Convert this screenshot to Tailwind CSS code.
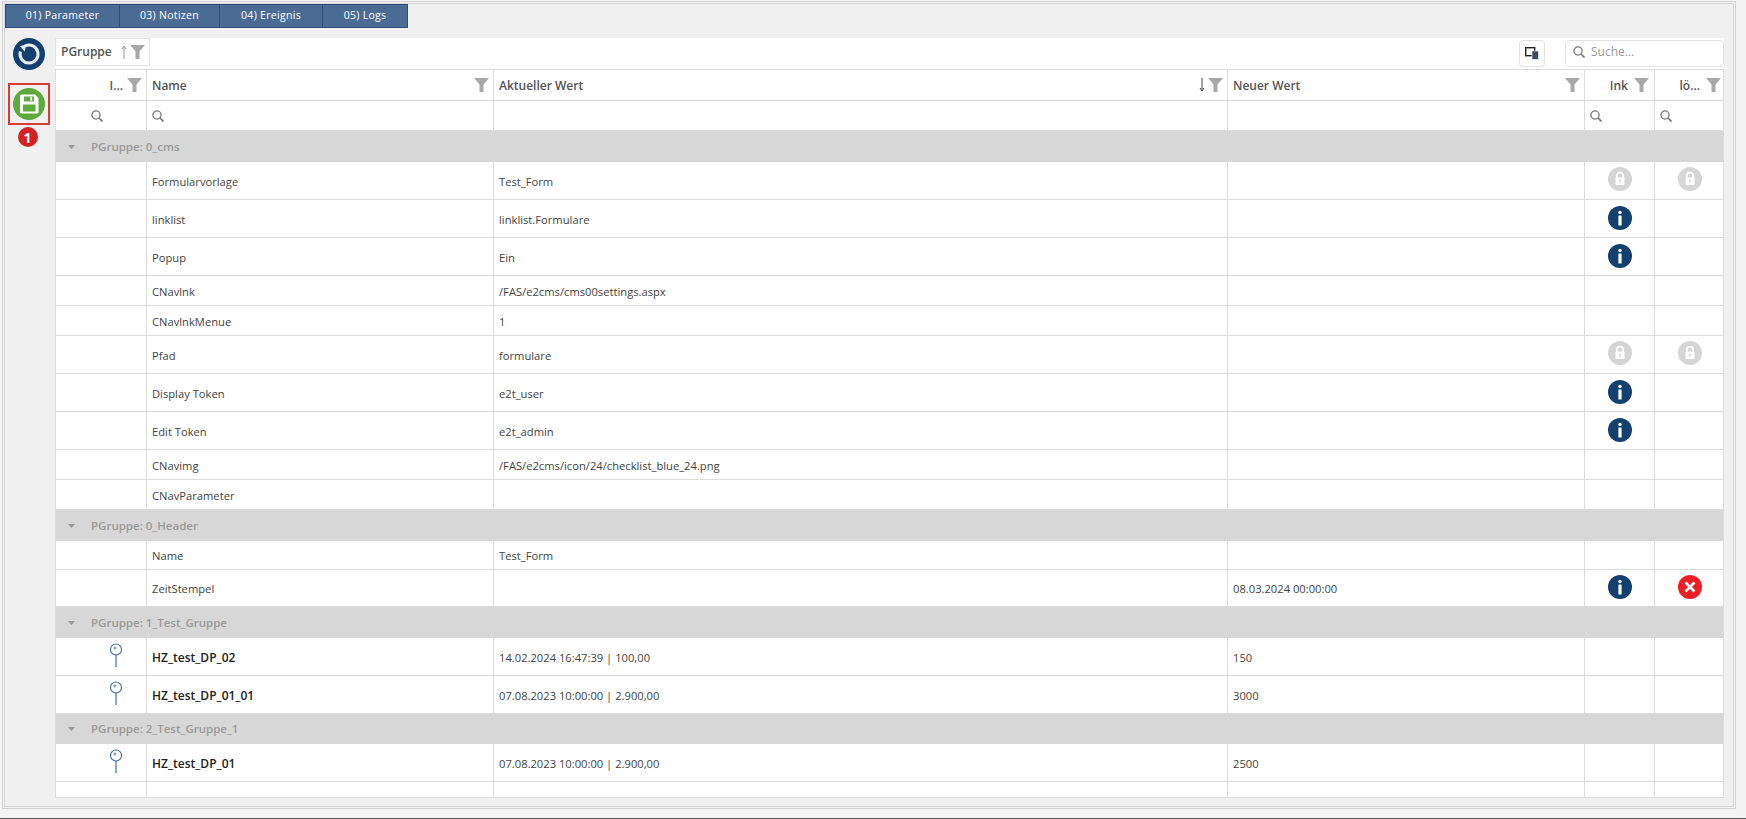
<!DOCTYPE html>
<html lang="de">
<head>
<meta charset="UTF-8">
<title>Parameter</title>
<script src="https://cdn.jsdelivr.net/npm/@tailwindcss/browser@4"></script>
</head>
<body class="h-[819px] w-[1746px] overflow-hidden bg-[#f4f4f4] border-b border-[#555] font-['Open_Sans',sans-serif] text-[11.2px] text-[#444]">
<div class="ml-[2px] mt-[1px] w-[1734px] h-[808px] border border-[#d4d4d4] p-[1px]">
  <div class="h-full border border-[#d4d4d4] bg-[#f0f0f0]">
    <!-- tabs -->
    <div class="flex h-[24px] text-[10.5px] tracking-[0.3px] text-white">
      <div class="w-[115px] flex items-center justify-center bg-[#4a6c94] border border-[#2f4f78]">01) Parameter</div>
      <div class="w-[100px] flex items-center justify-center bg-[#4a6c94] border border-[#2f4f78] border-l-0">03) Notizen</div>
      <div class="w-[103px] flex items-center justify-center bg-[#4a6c94] border border-[#2f4f78] border-l-0">04) Ereignis</div>
      <div class="w-[85px] flex items-center justify-center bg-[#4a6c94] border border-[#2f4f78] border-l-0">05) Logs</div>
    </div>
    <div class="flex mt-[10px]">
      <!-- side buttons -->
      <div class="w-[50px] flex flex-col items-center">
        <svg class="w-[32px] h-[32px] -ml-[2px]" viewBox="0 0 32 32">
          <circle cx="16" cy="16" r="16" fill="#14406f"/>
          <path d="M12 8 A9 9 0 1 1 7.400 13.500" fill="none" stroke="#e8eef4" stroke-width="3"/>
          <path d="M7 8 L13.500 6.500 L11.500 13.500 Z" fill="#e8eef4"/>
        </svg>
        <div class="mt-[13px] -ml-[2px] w-[42px] h-[42px] border-2 border-[#d93a3a] flex items-center justify-center">
          <svg class="w-[32px] h-[32px]" viewBox="0 0 32 32">
            <circle cx="16" cy="16" r="16" fill="#5cab3b"/>
            <path d="M7 8 Q7 6.500 8.500 6.500 H22 L25.500 10 V24 Q25.500 25.500 24 25.500 H8.500 Q7 25.500 7 24 Z" fill="#fff"/>
            <rect x="11" y="8.500" width="10" height="5" fill="#5cab3b"/>
            <rect x="17" y="9.200" width="2.200" height="3.400" fill="#fff"/>
            <rect x="10" y="16.500" width="12.500" height="7" fill="#5cab3b"/>
          </svg>
        </div>
        <div class="mt-[2px] -ml-[5px] w-[20px] h-[20px] rounded-full bg-[#d42222] text-white text-[14px] font-bold flex items-center justify-center">1</div>
      </div>
      <!-- main -->
      <div class="w-[1669px]">
        <div class="h-[31px] bg-white flex items-start">
          <div class="w-[95px] h-[28px] border border-[#e2e2e2] flex items-center pl-[5px] font-semibold text-[12px] text-[#555]">
            <span>PGruppe</span>
            <svg class="w-[6px] h-[14px] ml-[9px]" viewBox="0 0 6 14"><path d="M3 14 V1 M1 4 L3 1 L5 4" fill="none" stroke="#999" stroke-width="1"/></svg>
            <svg class="w-[15px] h-[14px] ml-[3px]" viewBox="0 0 15 14"><path d="M0 0 H15 L9.500 6.500 V14 H5.500 V6.500 Z" fill="#a8a8a8"/></svg>
          </div>
          <div class="ml-auto mt-[2px] w-[26px] h-[27px] border border-[#e2e2e2] rounded-[4px] flex items-center justify-center">
            <svg class="w-[14px] h-[13px]" viewBox="0 0 14 13">
              <rect x=".7" y=".7" width="9" height="8" fill="none" stroke="#222" stroke-width="1.400"/>
              <rect x="7" y="4" width="6.500" height="8.500" fill="#3d4a5c" stroke="#fff" stroke-width=".6"/>
            </svg>
          </div>
          <div class="ml-[20px] mt-[2px] w-[159px] h-[27px] border border-[#e2e2e2] rounded-[4px] flex items-center pl-[7px] text-[#999] text-[12px]">
            <svg class="w-[12px] h-[12px] mb-[3px]" viewBox="0 0 12 12"><circle cx="5" cy="5" r="4.100" fill="none" stroke="#777" stroke-width="1.300"/><path d="M8 8 L11.500 11.500" stroke="#777" stroke-width="1.700"/></svg>
            <span class="ml-[6px] -mt-[3px]">Suche...</span>
          </div>
        </div>
        <div id="grid" class="border border-[#dcdcdc] bg-white w-[1669px] h-[729px] overflow-hidden"></div>
      </div>
    </div>
  </div>
</div>
<script>
const filter = '<svg class="w-[15px] h-[14px] shrink-0" viewBox="0 0 15 14"><path d="M0 0 H15 L9.500 6.500 V14 H5.500 V6.500 Z" fill="#a8a8a8"/></svg>';
const search = '<svg class="w-[12px] h-[12px]" viewBox="0 0 12 12"><circle cx="5" cy="5" r="4.100" fill="none" stroke="#777" stroke-width="1.300"/><path d="M8 8 L11.500 11.500" stroke="#777" stroke-width="1.700"/></svg>';
const lock = '<svg class="w-[24px] h-[24px] -mt-[4px]" viewBox="0 0 24 24"><circle cx="12" cy="12" r="12" fill="#d5d5d5"/><path d="M8.800 11 V8.800 A3.200 3.200 0 0 1 15.200 8.800 V11" fill="none" stroke="#fff" stroke-width="1.700"/><rect x="7.500" y="10.500" width="9" height="7.500" rx=".8" fill="#fff"/><rect x="11.200" y="12.500" width="1.600" height="3" fill="#d5d5d5"/></svg>';
const info = '<svg class="w-[24px] h-[24px] -mt-[2px]" viewBox="0 0 24 24"><circle cx="12" cy="12" r="12" fill="#14406f"/><circle cx="12" cy="6.500" r="1.700" fill="#fff"/><rect x="10.400" y="9.500" width="3.200" height="10" rx=".6" fill="#fff"/></svg>';
const cross = '<svg class="w-[24px] h-[24px] -mt-[2px]" viewBox="0 0 24 24"><circle cx="12" cy="12" r="12" fill="#ec2024"/><path d="M7.500 7.500 L16.500 16.500 M16.500 7.500 L7.500 16.500" stroke="#fff" stroke-width="2.600"/></svg>';
const pin = '<svg class="w-[14px] h-[24px] -mt-[4px] ml-[53px]" viewBox="0 0 14 24"><path d="M7 12 V24" stroke="#8ea8c6" stroke-width="2"/><circle cx="7" cy="6.500" r="5.500" fill="#fff" stroke="#3c6a9a" stroke-width="1.100"/><circle cx="5.800" cy="5" r="1" fill="none" stroke="#3c6a9a" stroke-width=".8"/></svg>';

const cols = 'grid grid-cols-[91px_347px_734px_357px_70px_70px] border-b border-[#dcdcdc]';
const cell = 'border-r border-[#dcdcdc] flex items-center min-w-0 last:border-r-0';

const rows = [
  ['g', 'PGruppe: 0_cms', 31],
  ['', 'Formularvorlage', 'Test_Form', '', lock, lock, 38],
  ['', 'linklist', 'linklist.Formulare', '', info, '', 38],
  ['', 'Popup', 'Ein', '', info, '', 38],
  ['', 'CNavlnk', '/FAS/e2cms/cms00settings.aspx', '', '', '', 30],
  ['', 'CNavlnkMenue', '1', '', '', '', 30],
  ['', 'Pfad', 'formulare', '', lock, lock, 38],
  ['', 'Display Token', 'e2t_user', '', info, '', 38],
  ['', 'Edit Token', 'e2t_admin', '', info, '', 38],
  ['', 'CNavimg', '/FAS/e2cms/icon/24/checklist_blue_24.png', '', '', '', 30],
  ['', 'CNavParameter', '', '', '', '', 30],
  ['g', 'PGruppe: 0_Header', 31],
  ['', 'Name', 'Test_Form', '', '', '', 29],
  ['', 'ZeitStempel', '', '08.03.2024 00:00:00', info, cross, 37],
  ['g', 'PGruppe: 1_Test_Gruppe', 31],
  [pin, 'HZ_test_DP_02', '14.02.2024 16:47:39 | 100,00', '150', '', '', 38],
  [pin, 'HZ_test_DP_01_01', '07.08.2023 10:00:00 | 2.900,00', '3000', '', '', 38],
  ['g', 'PGruppe: 2_Test_Gruppe_1', 30],
  [pin, 'HZ_test_DP_01', '07.08.2023 10:00:00 | 2.900,00', '2500', '', '', 38],
];

let html = `
  <div class="${cols} h-[31px] font-semibold text-[12px] text-[#555]">
    <div class="${cell} justify-end pr-[4px] gap-[4px]"><span class="pt-[2px]">I...</span>${filter}</div>
    <div class="${cell} justify-between pl-[5px] pr-[4px]"><span class="pt-[2px]">Name</span>${filter}</div>
    <div class="${cell} justify-between pl-[5px] pr-[4px]"><span class="pt-[2px]">Aktueller Wert</span>
      <span class="flex items-center gap-[3px]"><svg class="w-[6px] h-[14px]" viewBox="0 0 6 14"><path d="M3 0 V13 M1 10 L3 13 L5 10" fill="none" stroke="#444" stroke-width="1"/></svg>${filter}</span></div>
    <div class="${cell} justify-between pl-[5px] pr-[4px]"><span class="pt-[2px]">Neuer Wert</span>${filter}</div>
    <div class="${cell} justify-end pr-[5px] gap-[6px]"><span class="pt-[2px]">Ink</span>${filter}</div>
    <div class="${cell} justify-end pr-[4px] gap-[6px]"><span class="pt-[2px]">lö...</span>${filter}</div>
  </div>
  <div class="${cols} h-[30px]">
    <div class="${cell} pl-[35px]">${search}</div>
    <div class="${cell} pl-[5px]">${search}</div>
    <div class="${cell}"></div>
    <div class="${cell}"></div>
    <div class="${cell} pl-[5px]">${search}</div>
    <div class="${cell} pl-[5px]">${search}</div>
  </div>`;

for (const r of rows) {
  if (r[0] === 'g') {
    html += `<div class="flex items-center bg-[#d7d7d7] font-semibold text-[11.5px] text-[#9a9a9a]" style="height:${r[2]}px">
      <svg class="w-[7px] h-[4px] ml-[12px]" viewBox="0 0 7 4"><path d="M0 0 H7 L3.500 4 Z" fill="#999"/></svg>
      <span class="ml-[16px]">${r[1]}</span></div>`;
  } else {
    const nameClass = r[0] ? 'font-semibold text-[12px] text-[#222]' : '';
    html += `<div class="${cols}" style="height:${r[6]}px">
      <div class="${cell}">${r[0]}</div>
      <div class="${cell} pl-[5px] pt-[3px] ${nameClass}">${r[1]}</div>
      <div class="${cell} pl-[5px] pt-[3px]">${r[2]}</div>
      <div class="${cell} pl-[5px] pt-[3px]">${r[3]}</div>
      <div class="${cell} justify-center">${r[4]}</div>
      <div class="${cell} justify-center">${r[5]}</div>
    </div>`;
  }
}
html += `<div class="grid grid-cols-[91px_347px_734px_357px_70px_70px] h-[15px]">
  <div class="${cell}"></div><div class="${cell}"></div><div class="${cell}"></div><div class="${cell}"></div><div class="${cell}"></div><div class="${cell}"></div>
</div>`;
document.getElementById('grid').innerHTML = html;
</script>
</body>
</html>
